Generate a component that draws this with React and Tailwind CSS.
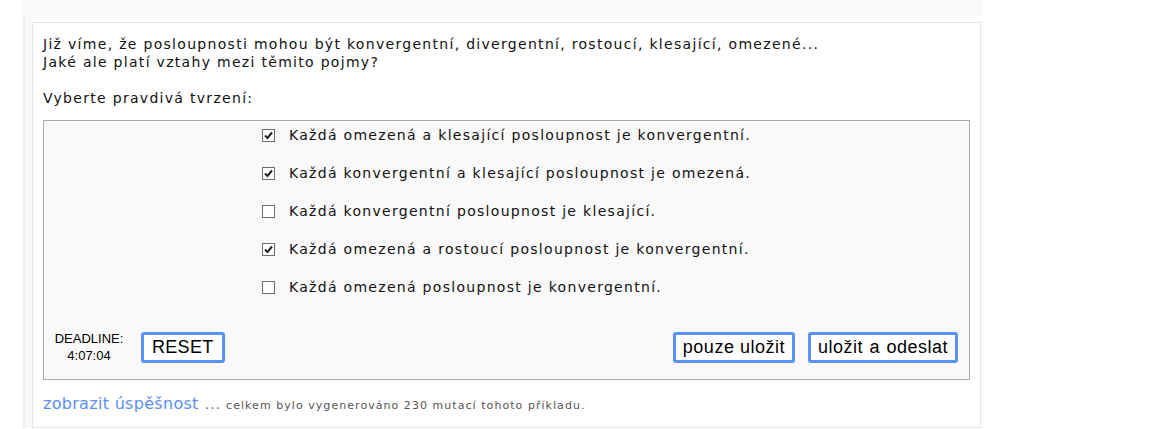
import React from "react";

const options = [
  { text: "Každá omezená a klesající posloupnost je konvergentní.", checked: true },
  { text: "Každá konvergentní a klesající posloupnost je omezená.", checked: true },
  { text: "Každá konvergentní posloupnost je klesající.", checked: false },
  { text: "Každá omezená a rostoucí posloupnost je konvergentní.", checked: true },
  { text: "Každá omezená posloupnost je konvergentní.", checked: false },
];

function Box({ checked }) {
  return (
    <span className="inline-flex h-[13px] w-[13px] shrink-0 items-center justify-center border border-[#6f6f6f] bg-white">
      {checked && (
        <svg width="9" height="9" viewBox="0 0 9 9">
          <path d="M1 4.5 L3.5 7 L8 1.5" fill="none" stroke="#222" strokeWidth="2" />
        </svg>
      )}
    </span>
  );
}

function Btn({ children, cls }) {
  return (
    <button
      className={
        "h-[31px] rounded-[3px] border-[3px] border-[#5a93f7] bg-white text-[18px] leading-none text-black [font-family:'Liberation_Sans',Arial,sans-serif] " +
        cls
      }
    >
      {children}
    </button>
  );
}

export default function App() {
  return (
    <div className="min-h-[429px] bg-white [font-family:'DejaVu_Sans',Verdana,sans-serif]">
      <div className="ml-[23px] w-[960px] bg-[#f9f9f9]">
        <div className="h-[16px]" />
        <div className="flex">
          <div className="w-[9px] border-l-2 border-[#eeeeee]" />
          <div className="flex-1 bg-white pt-[6px] pr-[2px]">
            <div className="border border-[#e6e6e6] px-[10px] pt-[12px] pb-[11px]">
              <div className="text-[14px] leading-[18px] tracking-[1.3px] text-[#111]">
                Již víme, že posloupnosti mohou být konvergentní, divergentní, rostoucí, klesající, omezené...
                <br />
                Jaké ale platí vztahy mezi těmito pojmy?
                <br />
                <br />
                Vyberte pravdivá tvrzení:
              </div>
              <div className="mt-[13px] border border-[#a9a9a9] bg-[#f9f9f9] pt-[5px] pb-[15px]">
                <div className="flex justify-center">
                  <div className="flex flex-col gap-[20px]">
                    {options.map((o, i) => (
                      <label key={i} className="flex h-[18px] items-center gap-[14px] text-[14px] leading-[18px] tracking-[1.3px] text-[#111]">
                        <Box checked={o.checked} />
                        <span>{o.text}</span>
                      </label>
                    ))}
                  </div>
                </div>
                <div className="mt-[34px] flex items-center pl-[10px] pr-[11px]">
                  <div className="w-[70px] text-center text-[13px] leading-[17px] text-black [font-family:'Liberation_Sans',Arial,sans-serif]">
                    DEADLINE:
                    <br />
                    4:07:04
                  </div>
                  <div className="ml-[17px]">
                    <Btn cls="px-[8px] tracking-[0.3px]">RESET</Btn>
                  </div>
                  <div className="ml-auto flex gap-[13px]">
                    <Btn cls="px-[7px] tracking-[0.5px]">pouze uložit</Btn>
                    <Btn cls="px-[7px] tracking-[0.5px] [word-spacing:1px]">uložit a odeslat</Btn>
                  </div>
                </div>
              </div>
              <div className="mt-[12px] flex items-baseline">
                <span className="text-[16px] tracking-[0.3px] text-[#5b8ff2]">zobrazit úspěšnost</span>
                <span className="ml-[6px] text-[14px] tracking-[1px] text-[#777]">...</span>
                <span className="ml-[5px] text-[11px] tracking-[1.05px] text-[#555]">
                  celkem bylo vygenerováno 230 mutací tohoto příkladu.
                </span>
              </div>
            </div>
          </div>
        </div>
      </div>
    </div>
  );
}
